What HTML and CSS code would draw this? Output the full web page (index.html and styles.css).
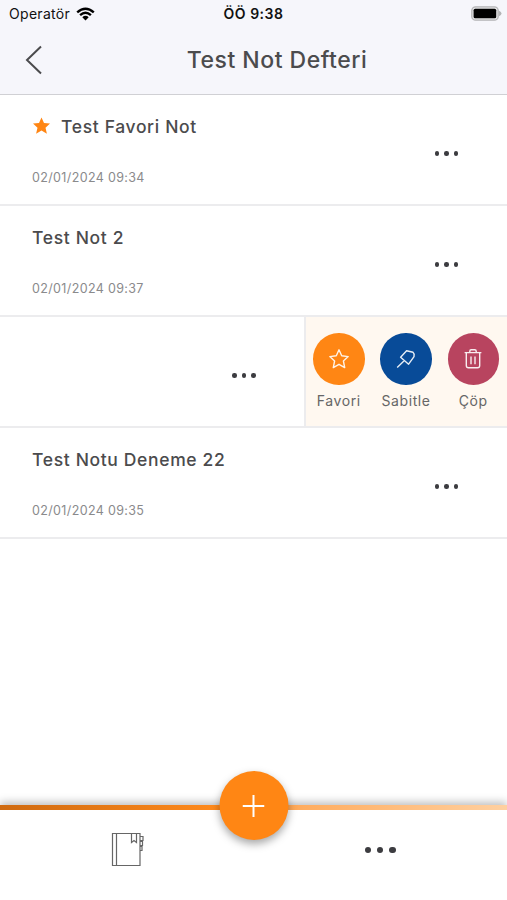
FILE: index.html
```
<!DOCTYPE html>
<html lang="tr">
<head>
  <meta charset="UTF-8">
  <meta name="viewport" content="width=device-width, initial-scale=1">
  <title>Test Not Defteri</title>
  <link rel="stylesheet" href="styles.css">
</head>
<body>

  <header class="header">
    <div class="status-bar">
      <div class="carrier">
        <span>Operatör</span>
        <svg class="wifi" width="19" height="14" viewBox="0 0 19 14">
          <path d="M1.2 5.3Q9.5-2 17.8 5.3M4.1 8.2Q9.5 3.3 14.9 8.2" fill="none" stroke="#000" stroke-width="2.4"/>
          <path d="M6.3 10.2Q9.5 7.4 12.7 10.2L9.5 13.5Z"/>
        </svg>
      </div>
      <span class="clock">ÖÖ 9:38</span>
      <svg class="battery" width="31" height="15" viewBox="0 0 31 15">
        <rect x="0.8" y="0.8" width="26.4" height="13.4" rx="3.8" fill="#e4e4e6" stroke="#b4b4b6" stroke-width="1.3"/>
        <rect x="2.6" y="2.7" width="22.6" height="9.6" rx="1.6"/>
        <path d="M28 4.8Q30.5 6 30.5 7.5T28 10.2Z" fill="#b4b4b6"/>
      </svg>
    </div>
    <div class="nav-bar">
      <svg class="back" width="18" height="30" viewBox="0 0 18 30">
        <path d="M16 1.5L2 15L16 28.5" fill="none" stroke="#4b4b4d" stroke-width="2"/>
      </svg>
      <h1>Test Not Defteri</h1>
    </div>
  </header>

  <main class="notes">
    <div class="note">
      <div class="note-text">
        <h2 class="favorite">
          <svg width="18" height="18" viewBox="0 0 18 18">
            <path d="M9.5 .4L12 6L18 6.6L13.5 10.7L14.9 16.8L9.5 13.6L4.1 16.8L5.5 10.7L1 6.6L7 6Z" fill="#ff8614"/>
          </svg>
          <span>Test Favori Not</span>
        </h2>
        <time>02/01/2024 09:34</time>
      </div>
      <div class="dots"><i></i><i></i><i></i></div>
    </div>

    <div class="note">
      <div class="note-text">
        <h2>Test Not 2</h2>
        <time>02/01/2024 09:37</time>
      </div>
      <div class="dots"><i></i><i></i><i></i></div>
    </div>

    <!-- row swiped to the left, actions open -->
    <div class="note swiped">
      <div class="dots"><i></i><i></i><i></i></div>
      <div class="actions">
        <div class="action">
          <div class="circle orange">
            <svg width="22" height="22" viewBox="0 0 22 22">
              <path d="M11 1.8L13.7 7.8L20.2 8.6L15.4 13L16.7 19.6L11 16.3L5.3 19.6L6.6 13L1.8 8.6L8.3 7.8Z"/>
            </svg>
          </div>
          <span>Favori</span>
        </div>
        <div class="action">
          <div class="circle blue">
            <svg width="22" height="22" viewBox="0 0 22 22">
              <path d="M11.6 2.8L18 4.3Q19.6 5.6 19 8.6L13.6 16.2L5.6 9.2ZM9.4 12.6L2.2 19.4"/>
            </svg>
          </div>
          <span>Sabitle</span>
        </div>
        <div class="action">
          <div class="circle red">
            <svg width="22" height="22" viewBox="0 0 22 22">
              <path d="M2.6 4.6H19.4M7.8 4.4V3.3Q7.8 1.8 9.2 1.8H12.8Q14.2 1.8 14.2 3.3V4.4M4.3 4.6V17.5Q4.3 19.8 6.5 19.8H15.5Q17.7 19.8 17.7 17.5V4.6M9 8.5V16.2M13 8.5V16.2"/>
            </svg>
          </div>
          <span>Çöp</span>
        </div>
      </div>
    </div>

    <div class="note">
      <div class="note-text">
        <h2>Test Notu Deneme 22</h2>
        <time>02/01/2024 09:35</time>
      </div>
      <div class="dots"><i></i><i></i><i></i></div>
    </div>
  </main>

  <footer class="tab-bar">
    <div class="tab">
      <svg width="34" height="36" viewBox="0 0 34 36" fill="none" stroke="#666" stroke-width="1.2">
        <path d="M2.5 1.5H30V33.5H2.5ZM6.5 1.5V33.5"/>
        <path d="M21.5 1.5V10.5L24 8.5L26.5 10.5V1.5"/>
        <path d="M30 4.5H33V8.5H30M30 9.5H32.5V13.5H30M30 14.5H32V18.5H30"/>
      </svg>
    </div>
    <div class="tab">
      <div class="dots big"><i></i><i></i><i></i></div>
    </div>
    <button class="add-btn" aria-label="Not ekle">
      <svg width="22" height="22" viewBox="0 0 22 22">
        <path d="M11 0V22M0 11H22" stroke="#fff" stroke-width="2"/>
      </svg>
    </button>
  </footer>

</body>
</html>
```

FILE: styles.css
```
* {
  box-sizing: border-box;
}

body {
  margin: 0;
  height: 900px;
  display: flex;
  flex-direction: column;
  overflow: hidden;
  background: #fff;
  color: #4b4b4d;
  font-family: Inter, "Liberation Sans", sans-serif;
}

h1, h2 {
  margin: 0;
  font-weight: 500;
  white-space: nowrap;
}

svg {
  display: block;
}

.header {
  height: 95px;
  background: #f6f6fb;
  border-bottom: 1px solid #d0d0d4;
}

.status-bar {
  height: 27px;
  padding: 0 5px 0 9px;
  display: grid;
  grid-template-columns: 1fr auto 1fr;
  align-items: center;
  color: #111;
  font-size: 14px;
  line-height: 27px;
}

.carrier {
  display: flex;
  align-items: center;
  gap: 6px;
  letter-spacing: 0.3px;
}

.clock {
  margin-right: 4px;
  font-weight: 600;
  letter-spacing: 0.5px;
}

.battery {
  justify-self: end;
}

.nav-bar {
  height: 65px;
  padding: 0 25px;
  display: grid;
  grid-template-columns: 18px 1fr 0;
  align-items: center;
}

h1 {
  margin-left: 29px;
  text-align: center;
  font-size: 23px;
  line-height: 30px;
  letter-spacing: 0.5px;
}

.note {
  height: 111px;
  padding: 0 49px 0 32px;
  display: flex;
  align-items: center;
  justify-content: space-between;
  border-bottom: 2px solid #ececee;
}

.note-text {
  height: 100%;
  padding-top: 20px;
}

h2 {
  font-size: 17.5px;
  line-height: 24px;
  letter-spacing: 0.65px;
}

.favorite {
  display: flex;
  align-items: center;
  gap: 11px;
}

.favorite svg {
  margin-top: -2px;
}

time {
  display: block;
  margin-top: 30px;
  font-size: 12.5px;
  line-height: 18px;
  letter-spacing: 0.36px;
  color: #8a8a8c;
}

.dots {
  display: flex;
  gap: 5px;
  padding-top: 8px;
}

.dots i {
  width: 4.5px;
  height: 4.5px;
  border-radius: 50%;
  background: #3c3c40;
}

.swiped {
  padding: 0;
}

.swiped .dots {
  margin-left: 232px;
}

.actions {
  width: 203px;
  height: 100%;
  padding: 16px 8px 0 7px;
  display: flex;
  justify-content: space-between;
  background: #fff8f0;
  border-left: 2px solid #ececee;
}

.action {
  width: 51.5px;
  display: flex;
  flex-direction: column;
  align-items: center;
  gap: 7.5px;
  font-size: 14px;
  line-height: 18px;
  letter-spacing: 0.6px;
  color: #666;
}

.circle {
  width: 51.5px;
  height: 51.5px;
  border-radius: 50%;
  display: flex;
  align-items: center;
  justify-content: center;
}

.circle path {
  fill: none;
  stroke: #fff;
  stroke-width: 1.4;
  stroke-linejoin: round;
  opacity: 0.9;
}

.orange {
  background: #ff8614;
}

.blue {
  background: #084b98;
}

.red {
  background: #b8445f;
}

.tab-bar {
  position: relative;
  height: 95px;
  margin-top: auto;
  padding-top: 5px;
  display: grid;
  grid-template-columns: 1fr 1fr;
  background: linear-gradient(#fff, #fff) 0 5px no-repeat,
    linear-gradient(90deg, #cf6a10, #ff8a1c 43%, #ffad60 60%, #ffd0a0);
  box-shadow: 0 -3px 8px rgba(0, 0, 0, 0.25);
}

.tab {
  display: flex;
  justify-content: center;
  padding-top: 22px;
}

.big {
  gap: 6px;
  padding-top: 15px;
}

.big i {
  width: 6.4px;
  height: 6.4px;
}

/* floats over the orange line */
.add-btn {
  position: absolute;
  top: -34px;
  left: 50%;
  width: 69px;
  height: 69px;
  padding: 0;
  transform: translateX(-50%);
  display: flex;
  align-items: center;
  justify-content: center;
  border: none;
  border-radius: 50%;
  background: #ff8614;
  box-shadow: 0 4px 9px rgba(0, 0, 0, 0.35);
}
```
